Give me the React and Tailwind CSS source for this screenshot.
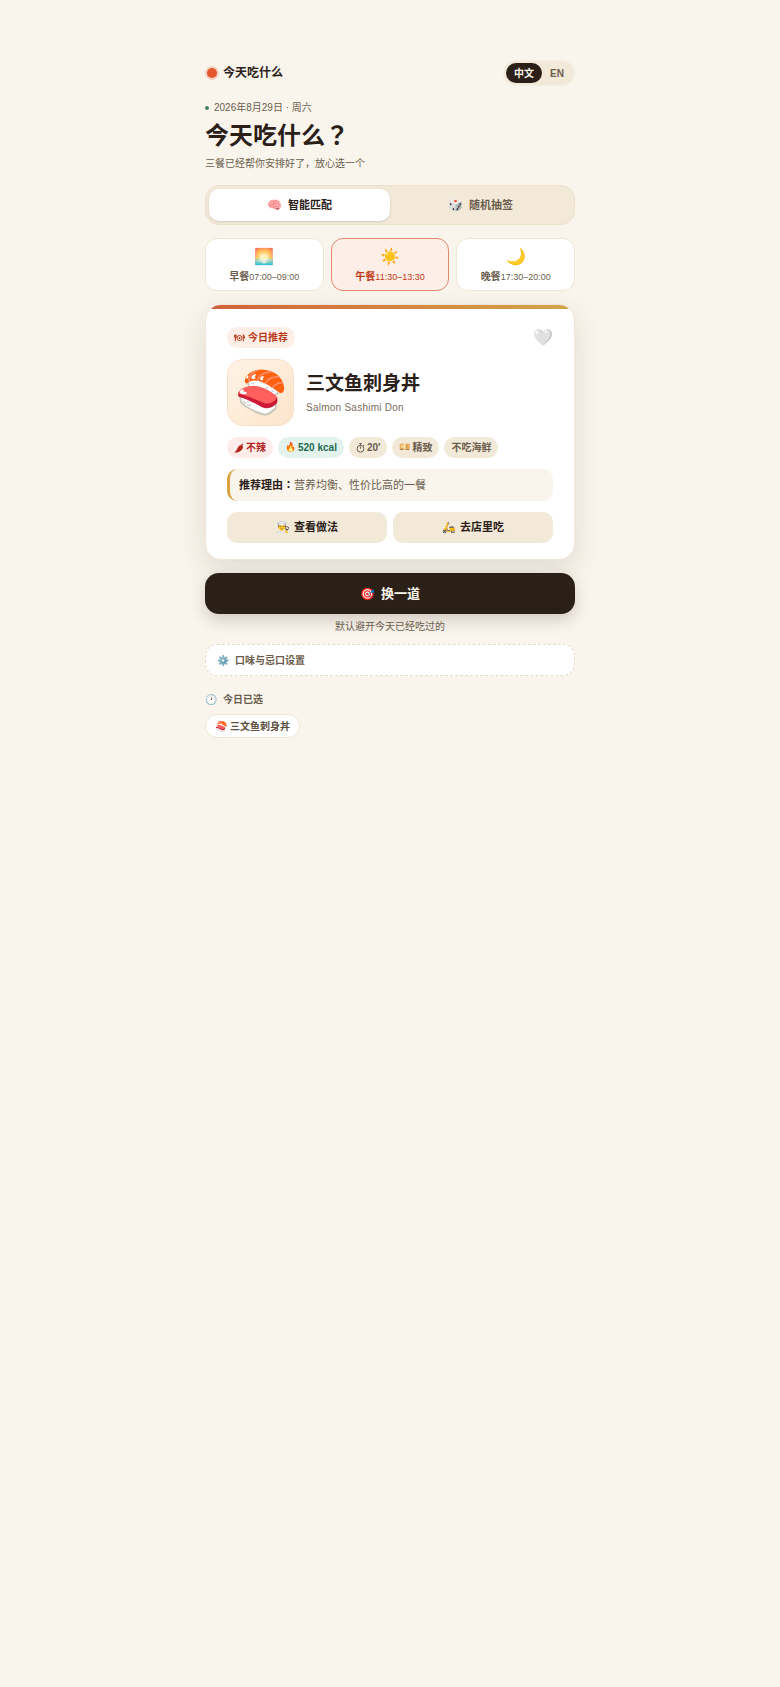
import React, { useState } from 'react';
import clsx from 'clsx';

const PlateIcon = () => (
  <svg viewBox="0 0 20 14" className="w-[11px] h-2" fill="none" stroke="currentColor" strokeWidth="1.8" aria-hidden="true">
    <circle cx="10" cy="7" r="4.6" />
    <circle cx="10" cy="7" r="1.8" fill="currentColor" stroke="none" />
    <path d="M1 1v4q0 1.5 1.5 1.5T4 5V1M2.5 1v12M17 13V1q2.2 1.5 2.2 6H17" />
  </svg>
);

const PepperIcon = () => (
  <svg viewBox="0 0 20 20" className="w-[10px] h-[10px]" fill="currentColor" aria-hidden="true">
    <path d="M13.5 4.5L16.8 0.8l1.6 1.2-2.2 3.3q3.2 1.6 1.4 5.2C15 16.5 8 19.5 0.5 19.5 4.5 16 5.5 13 7.5 9.5 9.3 6 11 4.2 13.5 4.5z" />
  </svg>
);

const TimerIcon = () => (
  <svg viewBox="0 0 18 20" className="w-[9px] h-[10px]" fill="none" stroke="currentColor" strokeWidth="2" aria-hidden="true">
    <circle cx="9" cy="11.5" r="6.8" />
    <path d="M9 11.5V7M6.5 1.2h5M9 1v3.5M14.5 4l2 2" />
  </svg>
);

const MEALS = [
  { id: 'breakfast', emoji: '🌅', name: '早餐', time: '07:00–09:00' },
  { id: 'lunch', emoji: '☀️', name: '午餐', time: '11:30–13:30' },
  { id: 'dinner', emoji: '🌙', name: '晚餐', time: '17:30–20:00' },
];

const TAGS = [
  { icon: <PepperIcon />, text: '不辣', style: 'bg-[#fdecea] text-[#b3261e]' },
  { icon: '🔥', text: '520 kcal', style: 'bg-[#e3f2ec] text-[#1e6b4f]' },
  { icon: <TimerIcon />, text: '20′', style: 'bg-[#f2e9d8] text-[#6b5d4d]' },
  { icon: '💴', text: '精致', style: 'bg-[#f2e9d8] text-[#6b5d4d]' },
  { icon: null, text: '不吃海鲜', style: 'bg-[#f2e9d8] text-[#6b5d4d]' },
];

const Header = () => {
  const [lang, setLang] = useState('zh');
  const item = (id) =>
    clsx(
      'h-5 px-2 rounded-full text-[10px] font-bold',
      lang === id ? 'bg-[#2b2018] text-[#faf5ec]' : 'text-[#6b5d4d]'
    );

  return (
    <header className="flex items-center justify-between">
      <div className="flex items-center gap-1">
        <span className="w-[14px] h-[14px] rounded-full bg-[#fad3c4] flex items-center justify-center">
          <span className="w-[10px] h-[10px] rounded-full bg-[#e4572e]"></span>
        </span>
        <span className="text-xs font-bold">今天吃什么</span>
      </div>
      <div className="flex h-[26px] p-0.5 rounded-full border border-[#f7efe1] bg-[#f2e9d8]">
        <button className={item('zh')} onClick={() => setLang('zh')}>中文</button>
        <button className={item('en')} onClick={() => setLang('en')}>EN</button>
      </div>
    </header>
  );
};

const ModeTabs = () => {
  const [mode, setMode] = useState('smart');
  const tab = (id) =>
    clsx(
      'flex-1 flex items-center justify-center gap-1.5 rounded-[10px] text-[11px] font-bold',
      mode === id ? 'bg-white shadow-sm text-[#2b2018]' : 'text-[#6b5d4d]'
    );

  return (
    <div className="mt-[13px] h-10 p-[3px] flex rounded-[14px] border border-[#ebe0cc] bg-[#f2e9d8]">
      <button className={tab('smart')} onClick={() => setMode('smart')}>
        <span className="text-xs">🧠</span>智能匹配
      </button>
      <button className={tab('random')} onClick={() => setMode('random')}>
        <span className="text-xs">🎲</span>随机抽签
      </button>
    </div>
  );
};

const MealPicker = () => {
  const [meal, setMeal] = useState('lunch');

  return (
    <div className="mt-[13px] grid grid-cols-3 gap-[7px]">
      {MEALS.map((m) => (
        <button
          key={m.id}
          onClick={() => setMeal(m.id)}
          className={clsx(
            'h-[53px] flex flex-col items-center justify-center rounded-xl border',
            meal === m.id
              ? 'bg-[#fdeee7] border-[#e08870] text-[#c23b16]'
              : 'bg-white border-[#efe5d3] text-[#6b5d4d]'
          )}
        >
          <span className="text-base leading-6">{m.emoji}</span>
          <span className="text-[9px] leading-4">
            <b className="text-[10px]">{m.name}</b>{m.time}
          </span>
        </button>
      ))}
    </div>
  );
};

const DishCard = () => {
  const [liked, setLiked] = useState(false);

  return (
    <section className="mt-[13px] rounded-2xl border border-[#f0e7d8] bg-white overflow-hidden shadow-[0_10px_28px_rgba(43,32,24,0.12)]">
      <div className="h-1 bg-linear-to-r from-[#d1603a] to-[#d3a547]"></div>
      <div className="px-[21px] pt-[18px] pb-4">
        <div className="flex items-center justify-between">
          <span className="h-[21px] px-[7px] flex items-center gap-[3px] rounded-full bg-[#fdeee7] text-[#b83a18] text-[10px] font-bold">
            <PlateIcon />今日推荐
          </span>
          <button aria-label="收藏" className="text-base leading-5" onClick={() => setLiked(!liked)}>
            {liked ? '❤️' : '🤍'}
          </button>
        </div>

        <div className="mt-[11px] flex items-center gap-3">
          <div className="w-[67px] h-[67px] rounded-2xl border border-[#f6dfc8] bg-linear-to-br from-[#fff3e6] to-[#fde4cb] flex items-center justify-center text-[42px] leading-none">
            🍣
          </div>
          <div className="pt-0.5">
            <h2 className="text-[19px] leading-7 font-bold">三文鱼刺身丼</h2>
            <p className="text-[10px] leading-5 tracking-wide text-[#7a6c5d]">Salmon Sashimi Don</p>
          </div>
        </div>

        <div className="mt-[11px] flex flex-wrap gap-[5px]">
          {TAGS.map((tag) => (
            <span
              key={tag.text}
              className={clsx('h-[21px] px-[7px] flex items-center gap-0.5 rounded-full text-[10px] font-bold', tag.style)}
            >
              {tag.icon && <span className="text-[9px]">{tag.icon}</span>}
              {tag.text}
            </span>
          ))}
        </div>

        <p className="mt-[11px] h-8 pl-[9px] flex items-center rounded-[10px] border-l-3 border-[#d9a441] bg-[#faf5ec] text-[11px] text-[#6b5d4d]">
          <b className="text-[#2b2018] font-['Liberation_Sans','Noto_Sans_CJK_TC',sans-serif]">推荐理由：</b>营养均衡、性价比高的一餐
        </p>

        <div className="mt-[11px] grid grid-cols-2 gap-1.5 text-[11px] font-bold">
          <button className="h-[31px] flex items-center justify-center gap-1 rounded-[10px] bg-[#f2e9d8]">
            <span>👨‍🍳</span>查看做法
          </button>
          <button className="h-[31px] flex items-center justify-center gap-1 rounded-[10px] bg-[#f2e9d8]">
            <span>🛵</span>去店里吃
          </button>
        </div>
      </div>
    </section>
  );
};

const App = () => {
  return (
    <div className="min-h-screen bg-[#faf5ec] text-[#2b2018] font-['Liberation_Sans','Noto_Sans_CJK_SC',sans-serif]">
      <main className="max-w-[370px] mx-auto pt-[60px] pb-10">
        <Header />

        <div className="mt-[14px] flex items-center gap-[5px] text-[10px] leading-4 text-[#6b5d4d]">
          <span className="w-1 h-1 rounded-full bg-[#3f8468]"></span>
          2026年8月29日 · 周六
        </div>
        <h1 className="mt-0.5 text-2xl leading-9 font-bold font-['Liberation_Sans','Noto_Sans_CJK_TC',sans-serif]">今天吃什么？</h1>
        <p className="mt-0.5 text-[10px] leading-4 text-[#6b5d4d]">三餐已经帮你安排好了，放心选一个</p>

        <ModeTabs />
        <MealPicker />
        <DishCard />

        <button className="mt-[13px] w-full h-[41px] flex items-center justify-center gap-1.5 rounded-[14px] bg-[#2b2018] text-[#faf5ec] text-[13px] font-bold shadow-[0_6px_16px_rgba(43,32,24,0.2)]">
          <span className="text-xs">🎯</span>换一道
        </button>
        <p className="mt-[5px] text-center text-[10px] leading-4 text-[#6b5d4d]">默认避开今天已经吃过的</p>

        <button className="mt-[9px] w-full h-8 px-[11px] flex items-center gap-1.5 rounded-xl border border-dashed border-[#e6dac5] bg-white text-[10px] font-bold text-[#6b5d4d]">
          <span>⚙️</span>口味与忌口设置
        </button>

        <h3 className="mt-4 flex items-center gap-1.5 text-[10px] leading-4 font-bold text-[#6b5d4d]">
          <span>🕐</span>今日已选
        </h3>
        <div className="mt-1.5 flex">
          <span className="h-6 px-[9px] flex items-center gap-[3px] rounded-full border border-[#efe5d3] bg-white text-[10px] font-bold text-[#5d4f40]">
            <span>🍣</span>三文鱼刺身丼
          </span>
        </div>
      </main>
    </div>
  );
};

export default App;
